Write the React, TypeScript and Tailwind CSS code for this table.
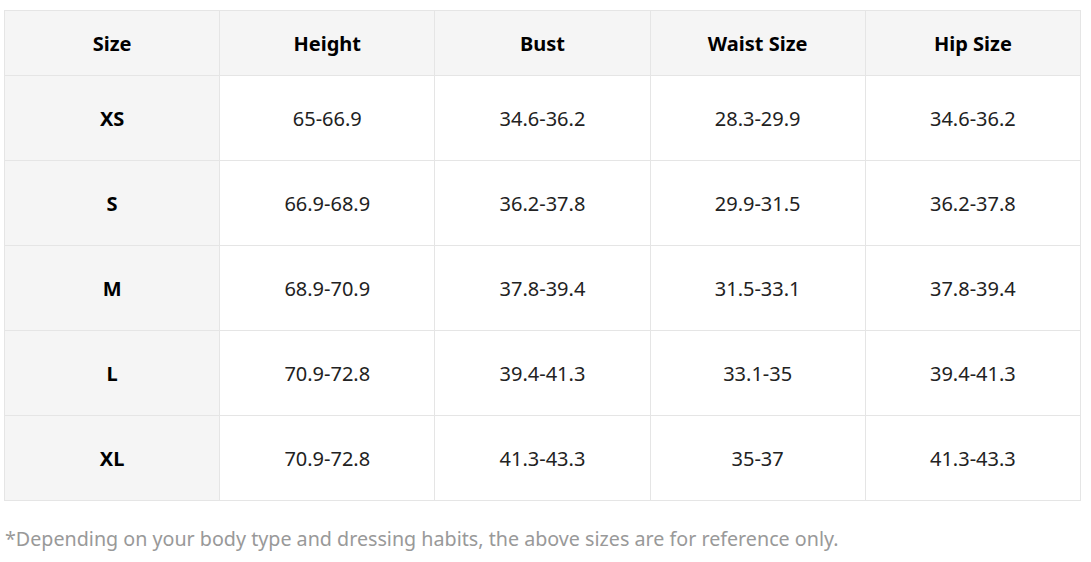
const headers = ["Size", "Height", "Bust", "Waist Size", "Hip Size"];

const rows = [
  ["XS", "65-66.9", "34.6-36.2", "28.3-29.9", "34.6-36.2"],
  ["S", "66.9-68.9", "36.2-37.8", "29.9-31.5", "36.2-37.8"],
  ["M", "68.9-70.9", "37.8-39.4", "31.5-33.1", "37.8-39.4"],
  ["L", "70.9-72.8", "39.4-41.3", "33.1-35", "39.4-41.3"],
  ["XL", "70.9-72.8", "41.3-43.3", "35-37", "41.3-43.3"],
];

const App = () => {
  return (
    <div className="bg-white w-[1091px] h-[562px] pt-[10px] pl-[4px] font-['Noto_Sans',sans-serif] text-black">
      <table className="w-[1077px] table-fixed border-collapse">
        <thead>
          <tr className="h-[65px] bg-[#f5f5f5]">
            {headers.map((h) => (
              <th key={h} className="border border-[#e5e5e5] text-[20px] font-bold text-center pt-[2px]">
                {h}
              </th>
            ))}
          </tr>
        </thead>
        <tbody>
          {rows.map((row) => (
            <tr key={row[0]} className="h-[85px]">
              {row.map((cell, i) =>
                i === 0 ? (
                  <td key={i} className="border border-[#e5e5e5] bg-[#f5f5f5] text-[20px] font-bold text-center pt-[2px]">
                    {cell}
                  </td>
                ) : (
                  <td key={i} className="border border-[#e5e5e5] text-[20px] text-center text-[#222] pt-[2px]">
                    {cell}
                  </td>
                )
              )}
            </tr>
          ))}
        </tbody>
      </table>
      <p className="mt-[23px] pl-[1px] text-[19.7px] text-[#999]">
        *Depending on your body type and dressing habits, the above sizes are for reference only.
      </p>
    </div>
  );
};

export default App;
